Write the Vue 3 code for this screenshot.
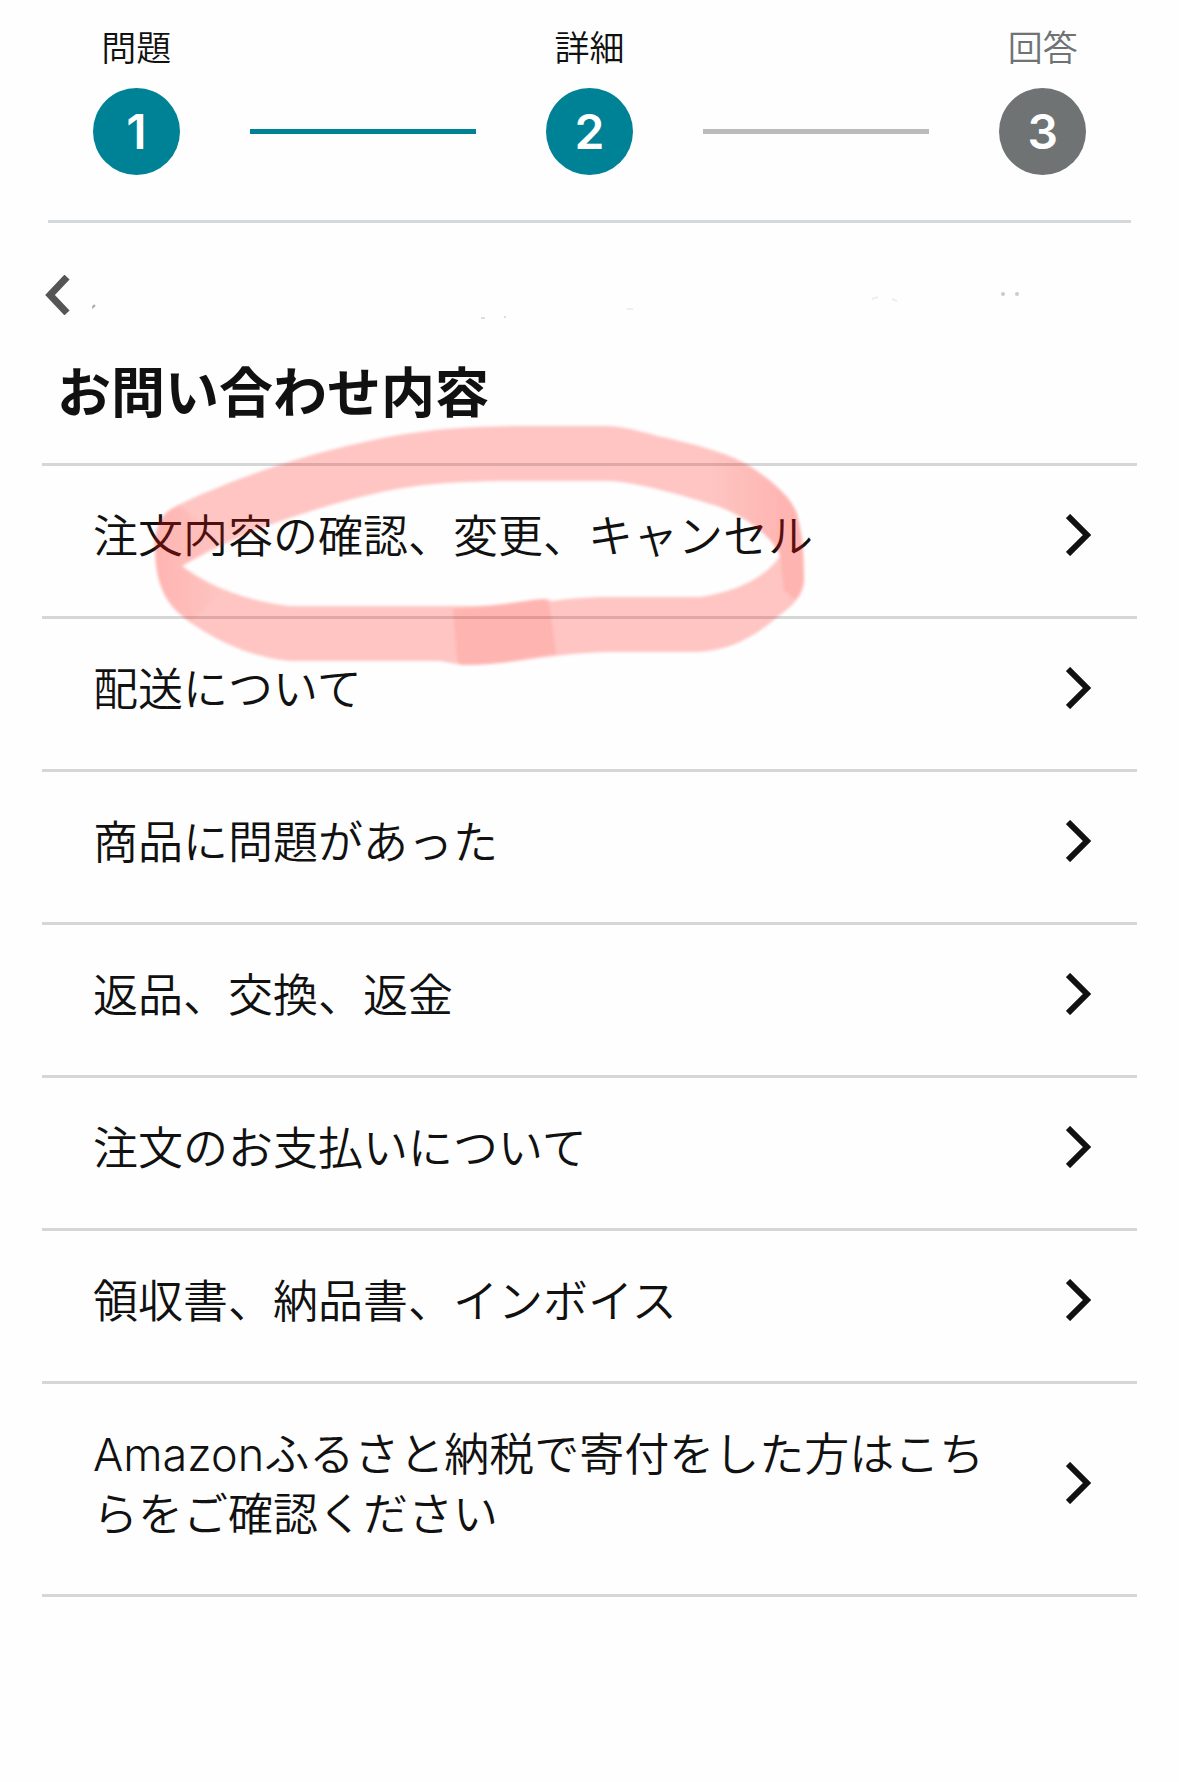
<script setup>
const steps = [
  { id: 1, label: '問題', active: true },
  { id: 2, label: '詳細', active: true },
  { id: 3, label: '回答', active: false },
]

const topics = [
  { id: 'order', title: '注文内容の確認、変更、キャンセル', marked: true },
  { id: 'delivery', title: '配送について' },
  { id: 'product', title: '商品に問題があった' },
  { id: 'return', title: '返品、交換、返金' },
  { id: 'payment', title: '注文のお支払いについて' },
  { id: 'receipt', title: '領収書、納品書、インボイス' },
  { id: 'furusato', title: 'Amazonふるさと納税で寄付をした方はこちらをご確認ください' },
]
</script>

<template>
  <main class="contact">
    <ol class="steps">
      <template v-for="(step, index) in steps" :key="step.id">
        <li
          v-if="index > 0"
          class="steps__line"
          :class="{ 'is-active': step.active }"
          aria-hidden="true"
        ></li>
        <li class="step" :class="{ 'is-active': step.active }">
          <span class="step__label">{{ step.label }}</span>
          <span class="step__number">{{ step.id }}</span>
        </li>
      </template>
    </ol>

    <hr class="divider" />

    <nav class="back">
      <a href="#" class="back__link" aria-label="戻る">
        <svg class="back__icon" viewBox="0 0 28 40" fill="none" stroke="currentColor" stroke-width="7">
          <path d="M25 2 8 20l17 18" />
        </svg>
      </a>
      <svg class="back__marks" viewBox="0 0 930 60" aria-hidden="true">
        <path d="M0 43l3-3" stroke="#aaaaaa" stroke-width="2" />
        <path d="M389 53h4M412 52h2" stroke="#dddddd" stroke-width="2" />
        <path d="M535 44h6M780 34l6-2M800 34l5 2" stroke="#eeeeee" stroke-width="2" />
        <circle cx="911" cy="29" r="2" fill="#cccccc" />
        <circle cx="925" cy="29" r="2" fill="#cccccc" />
      </svg>
    </nav>

    <h1 class="title">お問い合わせ内容</h1>

    <ul class="topics">
      <li v-for="topic in topics" :key="topic.id" class="topic">
        <a href="#" class="topic__link">
          <span class="topic__title">{{ topic.title }}</span>
          <svg class="topic__icon" viewBox="0 0 26 42" fill="none" stroke="currentColor" stroke-width="6">
            <path d="M2 2l19 19L2 40" />
          </svg>
        </a>

        <svg v-if="topic.marked" class="marker" viewBox="150 420 660 250" aria-hidden="true">
          <defs>
            <filter
              id="marker-soft"
              x="-5%"
              y="-5%"
              width="110%"
              height="110%"
              color-interpolation-filters="sRGB"
            >
              <feGaussianBlur stdDeviation="1.5" />
            </filter>
            <linearGradient id="marker-left" x1="0" x2="1">
              <stop offset="0" stop-color="#ff140a" />
              <stop offset="1" stop-color="#ff140a" stop-opacity="0" />
            </linearGradient>
            <linearGradient id="marker-right" x1="0" x2="1">
              <stop offset="0" stop-color="#ff140a" stop-opacity="0" />
              <stop offset="0.8" stop-color="#ff140a" />
            </linearGradient>
          </defs>
          <g class="marker__stroke" filter="url(#marker-soft)">
            <path
              fill="#ff140a"
              fill-rule="evenodd"
              d="M155 552C154 528 160 514 176 506C230 480 300 456 360 443C410 431 460 426 523 426H608C628 427 646 433 662 437C695 444 728 453 748 465C770 479 792 498 797 514C803 534 804 556 804 580C804 592 797 603 780 615C754 637 730 652 690 652H620C590 652 572 654 555 656C520 660 500 665 462 665L440 661H290C250 658 208 637 182 616C163 601 156 580 155 552Z M182 566C200 555 240 535 278 522C330 504 370 493 410 487C450 481 490 481 540 481H608C640 482 690 498 717 506C750 518 775 540 780 556C768 574 742 591 700 597H610C585 597 568 599 552 601L546 599C522 600 510 606 470 606H290C250 602 205 585 182 566Z"
            />
          </g>
          <g class="marker__overlap" filter="url(#marker-soft)">
            <path fill="#ff140a" d="M453 609C490 607 520 600 544 599Q549 600 550 609L556 654C530 656 505 665 465 665Q457 665 457 658Z" />
            <path fill="url(#marker-left)" d="M155 550C154 528 162 510 180 506L225 545L182 566L225 590L190 622C163 601 156 580 155 550Z" />
            <path fill="url(#marker-right)" d="M710 452C755 460 792 495 797 514C803 540 804 560 804 580Q803 590 795 600L784 590L780 556C775 540 750 518 710 504Z" />
          </g>
        </svg>
      </li>
    </ul>
  </main>
</template>

<style>
body {
  margin: 0;
  background: #fefefe;
}
</style>

<style scoped>
.contact {
  font-family: Inter, 'Noto Sans CJK JP', sans-serif;
  color: #111111;
}

.steps {
  display: grid;
  grid-template-columns: repeat(5, 1fr);
  align-items: end;
  margin: 0;
  padding: 24px 23px 45px;
  list-style: none;
}

.step {
  display: flex;
  flex-direction: column;
  align-items: center;
  gap: 16px;
  color: #6f7373;
}

.step.is-active {
  color: #111111;
}

.step__label {
  font-size: 35px;
  line-height: 48px;
  font-weight: 350;
}

.step__number {
  display: grid;
  place-items: center;
  width: 87px;
  height: 87px;
  border-radius: 50%;
  background: #6f7373;
  font-size: 48px;
  line-height: 60px;
  font-weight: 600;
  color: #ffffff;
}

.step.is-active .step__number {
  background: #008296;
}

.steps__line {
  height: 5px;
  margin-bottom: 41px;
  background: #bbbbbb;
}

.steps__line.is-active {
  background: #008296;
}

.divider {
  height: 3px;
  margin: 0 48px;
  border: 0;
  background: #d5d8db;
}

.back {
  display: flex;
  align-items: center;
  height: 60px;
  margin: 42px 42px 0;
}

.back__link {
  display: flex;
  width: 50px;
  color: #555555;
}

.back__icon {
  width: 28px;
  height: 40px;
}

.back__marks {
  width: 930px;
  height: 60px;
}

.title {
  margin: 29px 57px;
  font-size: 54px;
  line-height: 80px;
  font-weight: 700;
}

.topics {
  margin: 0 42px;
  padding: 0;
  border-top: 3px solid #d5d7d7;
  list-style: none;
}

.topic {
  position: relative;
  border-bottom: 3px solid #d5d7d7;
}

.topic__link {
  display: flex;
  align-items: center;
  justify-content: space-between;
  gap: 60px;
  padding: 37px 45px 49px 51px;
  color: inherit;
  text-decoration: none;
}

.topic__title {
  padding-top: 4px;
  font-size: 45px;
  line-height: 60px;
  font-weight: 350;
}

.topic__icon {
  flex: none;
  width: 26px;
  height: 42px;
}

/* highlighter stroke over the first topic */
.marker {
  position: absolute;
  top: -46px;
  left: 108px;
  width: 660px;
  height: 250px;
  z-index: 1;
  pointer-events: none;
}

.marker__stroke {
  opacity: 0.24;
}

.marker__overlap {
  opacity: 0.09;
}
</style>
